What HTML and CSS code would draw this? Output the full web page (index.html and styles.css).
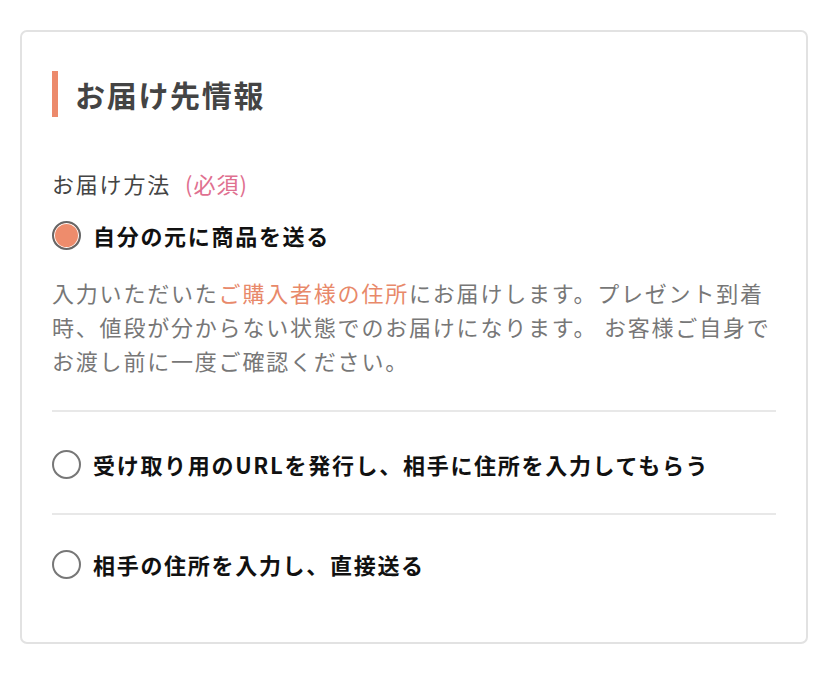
FILE: index.html
```html
<!DOCTYPE html>
<html lang="ja">
<head>
<meta charset="utf-8">
<link rel="stylesheet" href="styles.css">
</head>
<body>
<section class="card">
  <h2 class="heading">お届け先情報</h2>
  <div class="field-label">お届け方法<span class="required">(必須)</span></div>
  <div class="option option-first">
    <div class="radio-row">
      <span class="radio checked"></span>
      <span class="radio-text">自分の元に商品を送る</span>
    </div>
    <p class="desc">入力いただいた<span class="accent">ご購入者様の住所</span>にお届けします。プレゼント到着時、値段が分からない状態でのお届けになります。 お客様ご自身でお渡し前に一度ご確認ください。</p>
  </div>
  <div class="option option-mid">
    <div class="radio-row">
      <span class="radio"></span>
      <span class="radio-text">受け取り用のURLを発行し、相手に住所を入力してもらう</span>
    </div>
  </div>
  <div class="option option-last">
    <div class="radio-row">
      <span class="radio"></span>
      <span class="radio-text">相手の住所を入力し、直接送る</span>
    </div>
  </div>
</section>
</body>
</html>
```
FILE: styles.css
```css
html, body {
  margin: 0;
  padding: 0;
  background: #fff;
}
body {
  font-family: "Noto Sans CJK JP", "Noto Sans", sans-serif;
  color: #444;
  padding: 30px 20px;
}
.card {
  box-sizing: border-box;
  width: 788px;
  height: 614px;
  border: 2px solid #e2e2e2;
  border-radius: 7px;
  padding: 39px 30px 0;
}
.heading {
  margin: 0;
  height: 46px;
  border-left: 6px solid #ec8a6c;
  padding-left: 17px;
  font-size: 30px;
  line-height: 46px;
  font-weight: 700;
  letter-spacing: 1.7px;
  color: #444;
}
.field-label {
  margin-top: 49px;
  font-size: 22px;
  line-height: 34px;
  letter-spacing: 1.8px;
  color: #444;
}
.required {
  color: #df7090;
  margin-left: 14px;
  letter-spacing: 1px;
}
.option {
  border-bottom: 2px solid #e8e8e8;
}
.option-first {
  padding: 18px 0 33px;
}
.option-mid {
  padding: 35px 0 32px;
}
.option-last {
  border-bottom: none;
  padding: 32px 0 0;
}
.radio-row {
  display: flex;
  align-items: center;
  gap: 12px;
  height: 34px;
}
.radio {
  width: 29px;
  height: 29px;
  box-sizing: border-box;
  border: 2px solid #777;
  border-radius: 50%;
  flex: none;
  background: #fff;
}
.radio.checked {
  border-color: #666;
  background: #ee8c6c;
  box-shadow: inset 0 0 0 1px #fff;
}
.radio-text {
  font-size: 22px;
  font-weight: 700;
  letter-spacing: 1.7px;
  color: #111;
  line-height: 34px;
}
.desc {
  margin: 23px 0 0;
  font-size: 22px;
  line-height: 34px;
  letter-spacing: 1.8px;
  color: #777;
}
.accent {
  color: #e8896a;
}
```
